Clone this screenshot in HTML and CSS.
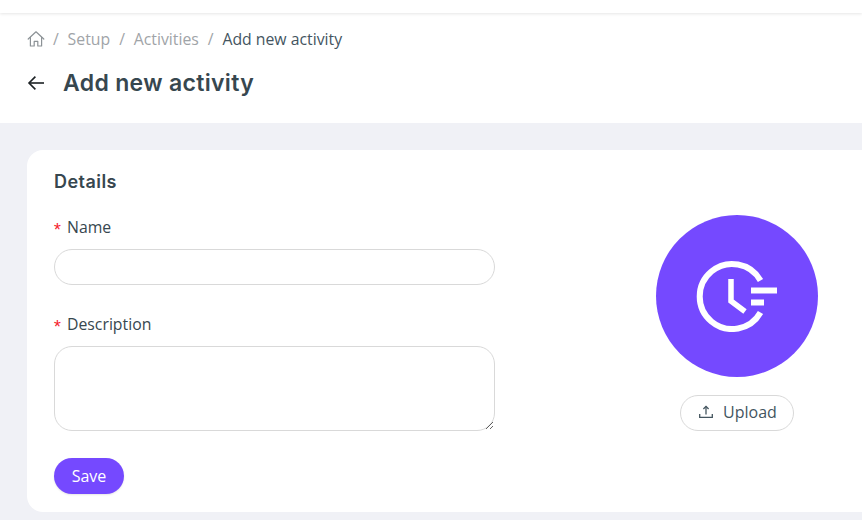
FILE: index.html
```html
<!doctype html>
<html>
  <head>
    <meta charset="utf-8">
    <meta name="viewport" content="width=device-width, initial-scale=1">
    <title>Add new activity</title>
    <link rel="stylesheet" href="styles.css">
  </head>
  <body>
    <div class="topbar"></div>

    <div class="page-header">
      <nav class="breadcrumb">
        <svg class="home-icon" width="18" height="18" viewBox="0 0 18 18" fill="none" stroke="#8c9296" stroke-width="1.2" stroke-linejoin="round" stroke-linecap="round">
          <path d="M1.200 9 9 1.800 16.800 9"/>
          <path d="M3.400 7.400V16h3.800v-4.600h3.600V16h3.800V7.400"/>
        </svg>
        <span class="sep">/</span>
        <a>Setup</a>
        <span class="sep">/</span>
        <a>Activities</a>
        <span class="sep">/</span>
        <span class="current">Add new activity</span>
      </nav>
      <div class="title-row">
        <svg class="back-icon" width="18" height="16" viewBox="0 0 18 16" fill="none" stroke="#1c2124" stroke-width="1.6">
          <path d="M17 8H2"/>
          <path d="M8.400 1.600 2 8l6.400 6.400"/>
        </svg>
        <h1>Add new activity</h1>
      </div>
    </div>

    <div class="content">
      <div class="card">
        <div class="form-col">
          <h2>Details</h2>
          <label class="field-label"><span class="req">*</span>Name</label>
          <input type="text" class="name-input">
          <label class="field-label"><span class="req">*</span>Description</label>
          <textarea class="desc-input"></textarea>
          <button class="save-btn">Save</button>
        </div>
        <div class="image-col">
          <div class="avatar">
            <svg width="82" height="72" viewBox="0 0 82 72" fill="none" stroke="#fff" stroke-width="6">
              <path d="M64.500 20.500A32.500 32.500 0 1 0 64.500 52.500"/>
              <path stroke-width="5.500" d="M35 19V41L49 51.500"/>
              <path d="M55 30.500H81"/>
              <path d="M55 42.500H68"/>
            </svg>
          </div>
          <button class="upload-btn">
            <svg width="14" height="14" viewBox="0 0 14 14" fill="none" stroke="#44555f" stroke-width="1.300">
              <path d="M7 9.500V1.500"/>
              <path d="M4.400 4 7 1.400 9.600 4"/>
              <path d="M.7 9V12.400H13.300V9"/>
            </svg>
            Upload
          </button>
        </div>
      </div>
    </div>
  </body>
</html>
```

FILE: styles.css
```css
html, body {
  margin: 0;
  height: 520px;
  overflow: hidden;
}
body {
  font-family: "Open Sans", sans-serif;
  font-size: 15.8px;
  background: #f0f1f6;
  color: #37474f;
}
.topbar {
  height: 13px;
  background: #fff;
  box-shadow: 0 1px 3px rgba(0, 0, 0, 0.1);
  position: relative;
}
.page-header {
  background: #fff;
  height: 110px;
  padding: 0 27px;
  box-sizing: border-box;
}
.breadcrumb {
  display: flex;
  align-items: center;
  height: 20px;
  padding-top: 16px;
  color: #9fa4a8;
  line-height: 20px;
}
.home-icon {
  margin-right: 8px;
}
.sep {
  margin-right: 8.8px;
}
.breadcrumb a {
  margin-right: 9px;
}
.current {
  color: #44555f;
}
.title-row {
  display: flex;
  align-items: center;
  margin-top: 17px;
  height: 34px;
}
.back-icon {
  margin-right: 18px;
}
h1 {
  margin: 0;
  font-family: Inter, sans-serif;
  font-size: 23px;
  letter-spacing: 0.33px;
  font-weight: 600;
  color: #37474f;
}
.content {
  padding: 27px 0 0 27px;
}
.card {
  width: 900px;
  height: 362px;
  box-sizing: border-box;
  background: #fff;
  border-radius: 16px;
  padding: 20px 27px 0;
  display: flex;
}
.form-col {
  width: 441px;
  display: flex;
  flex-direction: column;
  align-items: flex-start;
}
h2 {
  margin: 0 0 21px;
  font-family: Inter, sans-serif;
  font-size: 18px;
  letter-spacing: 0.45px;
  line-height: 24px;
  font-weight: 600;
  color: #37474f;
}
.field-label {
  height: 24px;
  line-height: 24px;
  margin-bottom: 10px;
  color: #37474f;
}
.req {
  display: inline-block;
  width: 15px;
  margin-left: -2px;
  font-family: "Liberation Mono", monospace;
  font-size: 18px;
  line-height: 17px;
  color: #f5222d;
  vertical-align: -3px;
}
.name-input, .desc-input {
  display: block;
  flex: none;
  width: 100%;
  box-sizing: border-box;
  background: #fff;
  border: 1px solid #d9d9d9;
  outline: none;
}
.name-input {
  height: 36px;
  border-radius: 18px;
  margin-bottom: 27px;
}
.desc-input {
  height: 85px;
  border-radius: 18px;
  margin-bottom: 27px;
  resize: both;
}
.save-btn {
  flex: none;
  width: 70px;
  height: 36px;
  border: none;
  border-radius: 18px;
  background: #7549ff;
  color: #fff;
  font-family: "Open Sans", sans-serif;
  font-size: 16px;
  box-shadow: 0 1px 2px rgba(0, 0, 0, 0.1);
}
.image-col {
  margin-left: 161px;
  padding-top: 45px;
  width: 162px;
  display: flex;
  flex-direction: column;
  align-items: center;
}
.avatar {
  width: 162px;
  height: 162px;
  border-radius: 50%;
  background: #7549ff;
  display: flex;
  align-items: center;
  justify-content: center;
}
.upload-btn {
  margin-top: 18px;
  width: 114px;
  height: 36px;
  padding: 0 0 2px 2px;
  border: 1px solid #d9d9d9;
  border-radius: 18px;
  background: #fff;
  color: #44555f;
  font-family: "Open Sans", sans-serif;
  font-size: 16px;
  display: flex;
  align-items: center;
  justify-content: center;
  gap: 10px;
}
```
